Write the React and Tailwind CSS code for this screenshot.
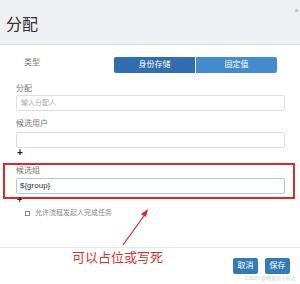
export default function App() {
  const font = { fontFamily: '"Liberation Sans", "Noto Sans CJK SC", sans-serif' };
  return (
    <div className="relative w-[300px] h-[284px] overflow-hidden bg-white" style={font}>
      <div className="flex h-[45px] items-start justify-between border-b border-[#d9dbde] bg-[#eef0f3]">
        <div className="pl-[6px] pt-[17px] text-[16px] leading-[16px] text-[#333]">分配</div>
        <div className="mt-[6px] mr-[1px] text-[8px] leading-[10px] text-[#999]">×</div>
      </div>

      <div className="pl-[16px] pr-[15px]">
        <div className="mt-[12px] flex h-[16px]">
          <div className="w-[98px] pl-[8px] pt-[1px] text-[8px] leading-[10px] text-[#777]">类型</div>
          <div className="flex">
            <div className="flex h-[16px] w-[81px] items-center justify-center rounded-l-[2px] bg-[#2f6dae] text-[8px] text-white">身份存储</div>
            <div className="ml-[1px] flex h-[16px] w-[81px] items-center justify-center rounded-r-[2px] bg-[#438bcc] text-[8px] text-white">固定值</div>
          </div>
        </div>

        <div className="mt-[11px] h-[10px] text-[8px] leading-[10px] text-[#777]">分配</div>
        <div className="mt-[1px] flex h-[16px] items-center rounded-[2px] border border-[#dedede] pl-[4px] text-[7px] text-[#aaa]">输入分配人</div>

        <div className="mt-[8px] h-[10px] text-[8px] leading-[10px] text-[#777]">候选用户</div>
        <div className="mt-[3px] h-[16px] rounded-[2px] border border-[#dedede]"></div>
        <div className="h-[10px] pl-[1px] text-[10px] font-bold leading-[10px] text-[#222]">+</div>

        <div className="mt-[5px] ml-[-13px] mr-[-10px] border-2 border-[#e0262a] pl-[11px] pr-[8px] pb-[3px]">
          <div className="mt-[1px] h-[10px] text-[8px] leading-[10px] text-[#777]">候选组</div>
          <div className="mt-[2px] flex h-[16px] items-center rounded-[2px] border border-[#a9c9e8] pl-[3px] text-[8px] text-[#333]">{"${group}"}</div>
        </div>
        <div className="mt-[-3px] h-[8px] pl-[1px] text-[9px] font-bold leading-[8px] text-[#222]">+</div>

        <div className="mt-[4px] flex h-[10px] items-center pl-[9px]">
          <div className="h-[5px] w-[5px] border border-[#888] bg-white"></div>
          <div className="ml-[5px] text-[7px] leading-[10px] text-[#888]">允许流程发起人完成任务</div>
        </div>
      </div>

      <div className="mt-[29px] border-t border-[#e8e8e8]"></div>
      <div className="flex justify-end gap-[7px] pt-[10px] pr-[10px]">
        <div className="flex h-[16px] w-[25px] items-center justify-center rounded-[2px] bg-[#337ab7] text-[8px] text-white">取消</div>
        <div className="flex h-[16px] w-[25px] items-center justify-center rounded-[2px] bg-[#337ab7] text-[8px] text-white">保存</div>
      </div>

      <svg className="absolute left-0 top-0" width="300" height="284" viewBox="0 0 300 284">
        <line x1="123" y1="245" x2="146" y2="213" stroke="#e0262a" strokeWidth="1.2" />
        <polygon points="148,209 141,214 146,217" fill="#e0262a" />
      </svg>
      <div className="absolute left-[72px] top-[250px] text-[13px] leading-[16px] text-[#d9342b]">可以占位或写死</div>
      <div className="absolute right-[4px] top-[275px] text-[5px] leading-[6px] text-[#c8d0da]">CSDN @喝茶的小码农</div>
    </div>
  );
}
